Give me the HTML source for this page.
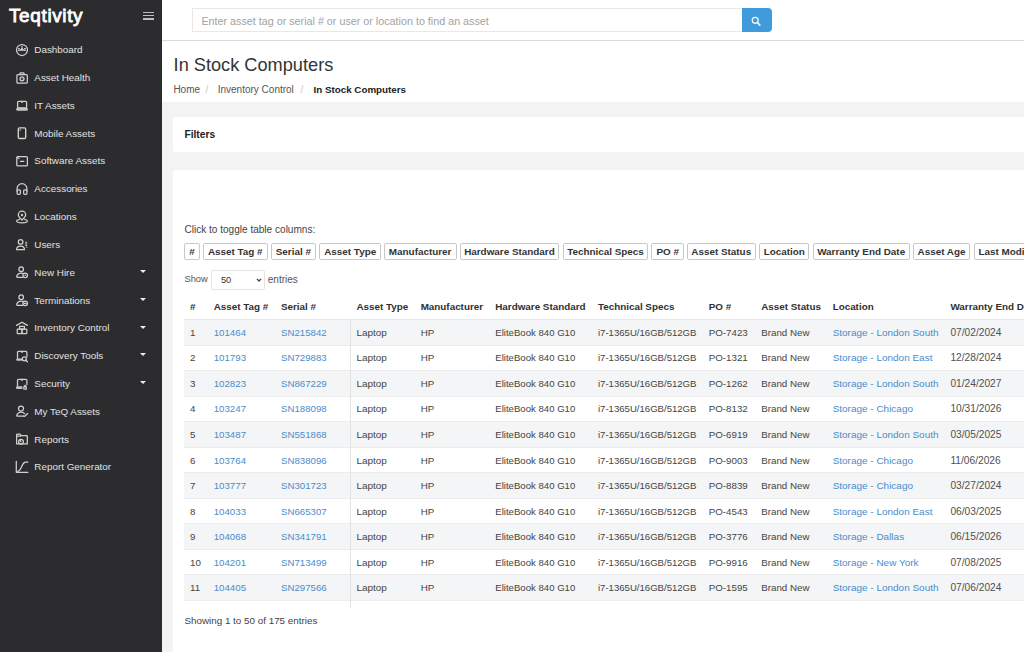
<!DOCTYPE html>
<html><head><meta charset="utf-8">
<style>
*{box-sizing:border-box;margin:0;padding:0}
html,body{width:1024px;height:652px;overflow:hidden;background:#fff;font-family:"Liberation Sans",sans-serif;color:#333}
.a{position:absolute;white-space:nowrap}
#sb{position:absolute;left:0;top:0;width:162px;height:652px;background:#2c2c2e}
.logo{position:absolute;left:9px;top:6.2px;font-size:19px;line-height:20px;font-weight:normal;color:#fff;letter-spacing:0.62px;-webkit-text-stroke:0.8px #fff}
.hb{position:absolute;left:143px;width:11px;height:1.4px;background:#bdbdbd}
.nv{position:absolute;left:34.3px;font-size:9.9px;line-height:14px;color:#e2e2e2;white-space:nowrap}
.ic{position:absolute;left:14.5px;width:14px;height:14px}
.ic svg{display:block}
.caret{position:absolute;left:140px;width:0;height:0;border-left:3px solid transparent;border-right:3px solid transparent;border-top:3.5px solid #eee}
#hdr{position:absolute;left:162px;top:0;width:862px;height:41px;background:#fff;border-bottom:1px solid #d9d9d9}
#search{position:absolute;left:192px;top:8px;width:551px;height:24px;border:1px solid #e8e8e8;border-radius:0;background:#fff}
#ph{position:absolute;left:201.4px;top:14px;font-size:10.75px;line-height:14px;color:#a2a2a2;white-space:nowrap}
#sbtn{position:absolute;left:742.3px;top:8px;width:29.3px;height:24px;background:#3f9bd9;border-radius:0 4px 4px 0}
#title{position:absolute;left:173.6px;top:54.1px;font-size:18.2px;line-height:22px;color:#333;white-space:nowrap}
.bc{position:absolute;top:82.6px;font-size:10px;line-height:14px;white-space:nowrap;color:#555}
#gray{position:absolute;left:162px;top:102px;width:862px;height:550px;background:#f3f3f4}
#filt{position:absolute;left:173px;top:117px;width:900px;height:34.5px;background:#fff;border-radius:3px}
#ftxt{position:absolute;left:184.4px;top:127.5px;font-size:10.26px;line-height:14px;font-weight:bold;color:#222;white-space:nowrap}
#card{position:absolute;left:173px;top:170px;width:900px;height:500px;background:#fff;border-radius:3px}
#ctt{position:absolute;left:184.4px;top:223.2px;font-size:10.07px;line-height:14px;color:#444;white-space:nowrap}
#tbs{position:absolute;left:184px;top:242.5px;width:1000px;white-space:nowrap;font-size:10px;line-height:0}
.tb{position:absolute;top:0;height:17px;border:1px solid #c9c9c9;border-radius:2px;padding:0;text-align:center;overflow:hidden;font-size:9.9px;line-height:15px;font-weight:bold;color:#333;background:#fff}
#show{position:absolute;left:184.4px;top:272px;font-size:9.4px;line-height:14px;color:#555;white-space:nowrap}
#sel{position:absolute;left:211px;top:270px;width:54px;height:19.5px;border:1px solid #e3e3e3;border-radius:2px;background:#fff}
#sel50{position:absolute;left:220.9px;top:273px;font-size:9.4px;line-height:14px;color:#333}
#entr{position:absolute;left:267.8px;top:272.5px;font-size:10px;line-height:14px;color:#555;white-space:nowrap}
#tbl{position:absolute;left:184px;top:293px;border-collapse:collapse;table-layout:fixed;width:876px}
#tbl th{height:26.5px;text-align:left;font-weight:bold;font-size:9.85px;color:#303030;padding:0 0 0 6px;white-space:nowrap;overflow:hidden;border-bottom:1px solid #e6e6e6;vertical-align:middle}
#tbl td{height:25.55px;font-size:9.75px;color:#444;padding:0 0 0 6px;white-space:nowrap;overflow:hidden;border-bottom:1px solid #ececec;vertical-align:middle}
#tbl tr.odd td{background:#f4f5f6}
#tbl td.lk{color:#4a8dcc}
#tbl td:nth-child(2){font-size:9.7px}
#tbl td:nth-child(3){font-size:9.67px}
#tbl td:nth-child(4){font-size:9.94px}
#tbl td:nth-child(6){font-size:9.6px}
#tbl td:nth-child(7){font-size:9.58px}
#tbl td:nth-child(10){font-size:9.98px}
#tbl td:nth-child(11){font-size:10.2px;color:#505050}
#vline{position:absolute;left:350px;top:320px;width:1px;height:288px;background:#e2e2e2}
#showing{position:absolute;left:184.4px;top:613.5px;font-size:9.85px;line-height:14px;color:#444;white-space:nowrap}
</style></head><body>
<div id="sb">
<div class="logo">Teqtivity</div>
<div class="hb" style="top:11.7px"></div><div class="hb" style="top:15.1px"></div><div class="hb" style="top:18.4px"></div>
<div class="nv" style="top:43.23px">Dashboard</div><div class="ic" style="top:42.90px"><svg width="14" height="14" viewBox="0 0 14 14"><circle cx="7" cy="7" r="5.5" stroke="#d0d0d0" stroke-width="1.25" fill="none" stroke-linecap="round" stroke-linejoin="round"/><path d="M3.6 7.3Q7 6.2 10.4 7.3" stroke="#d0d0d0" stroke-width="1.25" fill="none" stroke-linecap="round" stroke-linejoin="round"/><path d="M7 7V5.2" stroke="#d4d4d4" stroke-width="1.7" stroke-linecap="round"/><circle cx="7" cy="3.4" r=".6" fill="#d4d4d4"/><path d="M3.6 5.6h.8M9.6 5.6h.8" stroke="#d0d0d0" stroke-width="1.25" fill="none" stroke-linecap="round" stroke-linejoin="round"/></svg></div><div class="nv" style="top:71.05px">Asset Health</div><div class="ic" style="top:70.71px"><svg width="14" height="14" viewBox="0 0 14 14"><rect x="1.9" y="3.5" width="10.4" height="8.7" rx="0.9" stroke="#d0d0d0" stroke-width="1.25" fill="none" stroke-linecap="round" stroke-linejoin="round"/><path d="M4.6 3.4L5.2 1.9h3.6l.6 1.5" stroke="#d0d0d0" stroke-width="1.25" fill="none" stroke-linecap="round" stroke-linejoin="round"/><circle cx="7" cy="7.8" r="2" stroke="#d0d0d0" stroke-width="1.25" fill="none" stroke-linecap="round" stroke-linejoin="round"/><circle cx="7" cy="7.8" r=".5" fill="#d4d4d4"/></svg></div><div class="nv" style="top:98.85px">IT Assets</div><div class="ic" style="top:98.52px"><svg width="14" height="14" viewBox="0 0 14 14"><rect x="2.6" y="2.3" width="9" height="6.6" rx="1" stroke="#d0d0d0" stroke-width="1.25" fill="none" stroke-linecap="round" stroke-linejoin="round"/><path d="M6 2.5l1 .9 1-.9" stroke="#d0d0d0" stroke-width="1.25" fill="none" stroke-linecap="round" stroke-linejoin="round"/><rect x="1.2" y="8.8" width="11.7" height="3" rx="1.4" fill="#c4c4c4"/></svg></div><div class="nv" style="top:126.66px">Mobile Assets</div><div class="ic" style="top:126.33px"><svg width="14" height="14" viewBox="0 0 14 14"><rect x="3.3" y="1.9" width="7.4" height="10.6" rx="1.3" stroke="#d4d4d4" stroke-width="1.35" fill="none"/><circle cx="5.2" cy="3.9" r=".75" fill="#e0e0e0"/></svg></div><div class="nv" style="top:154.47px">Software Assets</div><div class="ic" style="top:154.14px"><svg width="14" height="14" viewBox="0 0 14 14"><rect x="1.8" y="2.6" width="10.6" height="9.3" rx="1" stroke="#d0d0d0" stroke-width="1.25" fill="none" stroke-linecap="round" stroke-linejoin="round"/><path d="M5.5 7.4h3.3" stroke="#d4d4d4" stroke-width="1.2" stroke-linecap="round"/><path d="M2.3 3.2l1.6 1.4" stroke="#d0d0d0" stroke-width="1.25" fill="none" stroke-linecap="round" stroke-linejoin="round"/></svg></div><div class="nv" style="top:182.28px">Accessories</div><div class="ic" style="top:181.95px"><svg width="14" height="14" viewBox="0 0 14 14"><path d="M2.1 9V6.6a4.9 4.9 0 0 1 9.8 0V9" stroke="#d0d0d0" stroke-width="1.25" fill="none" stroke-linecap="round" stroke-linejoin="round"/><rect x="2.1" y="7.9" width="3.3" height="4.4" rx="1" stroke="#d0d0d0" stroke-width="1.25" fill="none" stroke-linecap="round" stroke-linejoin="round"/><rect x="8.6" y="7.9" width="3.3" height="4.4" rx="1" stroke="#d0d0d0" stroke-width="1.25" fill="none" stroke-linecap="round" stroke-linejoin="round"/></svg></div><div class="nv" style="top:210.09px">Locations</div><div class="ic" style="top:209.76px"><svg width="14" height="14" viewBox="0 0 14 14"><path d="M7 10C4.6 7.8 3.3 6.3 3.3 4.8A3.7 3.7 0 0 1 10.7 4.8C10.7 6.3 9.4 7.8 7 10z" stroke="#d0d0d0" stroke-width="1.25" fill="none" stroke-linecap="round" stroke-linejoin="round"/><circle cx="7" cy="5" r="1.2" fill="#c8c8c8"/><path d="M4.4 9.3C2.6 9.7 1.6 10.3 1.6 11c0 1 2.4 1.8 5.4 1.8s5.4-.8 5.4-1.8c0-.7-1-1.3-2.8-1.7" stroke="#d0d0d0" stroke-width="1.25" fill="none" stroke-linecap="round" stroke-linejoin="round"/></svg></div><div class="nv" style="top:237.91px">Users</div><div class="ic" style="top:237.57px"><svg width="14" height="14" viewBox="0 0 14 14"><circle cx="5.6" cy="3.9" r="2.3" stroke="#d0d0d0" stroke-width="1.25" fill="none" stroke-linecap="round" stroke-linejoin="round"/><path d="M1.6 11.7C1.6 9.4 3.4 8 5.6 8S9.5 9.4 9.5 11.7z" stroke="#d0d0d0" stroke-width="1.25" fill="none" stroke-linecap="round" stroke-linejoin="round"/><path d="M10.2 4.2h2M10.2 5.8h2M10.2 7.4h2" stroke="#c0c0c0" stroke-width="1.1"/><circle cx="11.8" cy="9.2" r=".6" fill="#d4d4d4"/></svg></div><div class="nv" style="top:265.72px">New Hire</div><div class="ic" style="top:265.38px"><svg width="14" height="14" viewBox="0 0 14 14"><circle cx="6.2" cy="4.2" r="2.3" stroke="#d0d0d0" stroke-width="1.25" fill="none" stroke-linecap="round" stroke-linejoin="round"/><path d="M7.6 12.3H2.2C1.6 12.3 1.6 11.5 2 10.6 2.8 8.9 4.3 8.1 6.2 8.1c.6 0 1.1.1 1.6.3" stroke="#d0d0d0" stroke-width="1.25" fill="none" stroke-linecap="round" stroke-linejoin="round"/><circle cx="10.2" cy="10.3" r="2.3" stroke="#d0d0d0" stroke-width="1.25" fill="none" stroke-linecap="round" stroke-linejoin="round"/><circle cx="10.2" cy="10.3" r=".7" fill="#e8e8e8"/></svg></div><div class="caret" style="top:269.88px"></div><div class="nv" style="top:293.53px">Terminations</div><div class="ic" style="top:293.19px"><svg width="14" height="14" viewBox="0 0 14 14"><circle cx="6.2" cy="4.2" r="2.3" stroke="#d0d0d0" stroke-width="1.25" fill="none" stroke-linecap="round" stroke-linejoin="round"/><path d="M7.6 12.3H2.2C1.6 12.3 1.6 11.5 2 10.6 2.8 8.9 4.3 8.1 6.2 8.1c.6 0 1.1.1 1.6.3" stroke="#d0d0d0" stroke-width="1.25" fill="none" stroke-linecap="round" stroke-linejoin="round"/><circle cx="10.2" cy="10.3" r="2.3" stroke="#d0d0d0" stroke-width="1.25" fill="none" stroke-linecap="round" stroke-linejoin="round"/><path d="M9.2 10.3h2" stroke="#d0d0d0" stroke-width="1.25" fill="none" stroke-linecap="round" stroke-linejoin="round"/></svg></div><div class="caret" style="top:297.69px"></div><div class="nv" style="top:321.33px">Inventory Control</div><div class="ic" style="top:321.00px"><svg width="14" height="14" viewBox="0 0 14 14"><path d="M1.6 4.4L7 1.2l5.4 3.2" stroke="#d4d4d4" stroke-width="1.3" fill="none" stroke-linecap="round" stroke-linejoin="round"/><rect x="4.6" y="5.3" width="4.8" height="2.9" stroke="#d0d0d0" stroke-width="1.25" fill="none" stroke-linecap="round" stroke-linejoin="round"/><rect x="2.2" y="8.2" width="4.8" height="4.3" rx=".6" stroke="#d0d0d0" stroke-width="1.25" fill="none" stroke-linecap="round" stroke-linejoin="round"/><rect x="7" y="8.2" width="4.8" height="4.3" rx=".6" stroke="#d0d0d0" stroke-width="1.25" fill="none" stroke-linecap="round" stroke-linejoin="round"/></svg></div><div class="caret" style="top:325.50px"></div><div class="nv" style="top:349.14px">Discovery Tools</div><div class="ic" style="top:348.81px"><svg width="14" height="14" viewBox="0 0 14 14"><path d="M2.5 9.3V3.3a1 1 0 0 1 1-1h7.4a1 1 0 0 1 1 1v4.6" stroke="#d0d0d0" stroke-width="1.25" fill="none" stroke-linecap="round" stroke-linejoin="round"/><path d="M6.3 2.5l.7.8.7-.8" stroke="#d0d0d0" stroke-width="1.25" fill="none" stroke-linecap="round" stroke-linejoin="round"/><rect x="1.2" y="9.6" width="6" height="2.2" rx="1" fill="#c4c4c4"/><circle cx="9.3" cy="9.8" r="2" stroke="#d0d0d0" stroke-width="1.25" fill="none" stroke-linecap="round" stroke-linejoin="round"/><path d="M10.8 11.3l1.6 1.5" stroke="#d4d4d4" stroke-width="1.3" stroke-linecap="round"/></svg></div><div class="caret" style="top:353.31px"></div><div class="nv" style="top:376.95px">Security</div><div class="ic" style="top:376.62px"><svg width="14" height="14" viewBox="0 0 14 14"><path d="M2.5 9.3V3.3a1 1 0 0 1 1-1h7.4a1 1 0 0 1 1 1v4.2" stroke="#d0d0d0" stroke-width="1.25" fill="none" stroke-linecap="round" stroke-linejoin="round"/><path d="M6.3 2.5l.7.8.7-.8" stroke="#d0d0d0" stroke-width="1.25" fill="none" stroke-linecap="round" stroke-linejoin="round"/><rect x="1" y="9.3" width="6.6" height="2.6" rx="1.2" fill="#c4c4c4"/><path d="M8.3 12.7V9.6l1.8-2 1.8 2v3.1z" fill="#d0d0d0"/><rect x="9.2" y="10.6" width="1.8" height=".8" fill="#2c2c2e"/></svg></div><div class="caret" style="top:381.12px"></div><div class="nv" style="top:404.76px">My TeQ Assets</div><div class="ic" style="top:404.43px"><svg width="14" height="14" viewBox="0 0 14 14"><circle cx="6" cy="4.5" r="2.5" stroke="#d0d0d0" stroke-width="1.25" fill="none" stroke-linecap="round" stroke-linejoin="round"/><path d="M8.3 12.2H2.4C1.8 12.2 1.6 11.5 2 10.6 2.8 9 4.3 8.1 6 8.1c1.5 0 2.7.6 3.5 1.6" stroke="#d0d0d0" stroke-width="1.25" fill="none" stroke-linecap="round" stroke-linejoin="round"/><path d="M8.5 12l1.3.3 2.8-2.8" stroke="#d0d0d0" stroke-width="1.25" fill="none" stroke-linecap="round" stroke-linejoin="round"/></svg></div><div class="nv" style="top:432.57px">Reports</div><div class="ic" style="top:432.24px"><svg width="14" height="14" viewBox="0 0 14 14"><path d="M1.6 11.9V2.7a.6.6 0 0 1 .6-.6h2.8l1.1 1.4h5.6a.6.6 0 0 1 .6.6v7.8z" stroke="#d0d0d0" stroke-width="1.25" fill="none" stroke-linecap="round" stroke-linejoin="round"/><path d="M1.6 4.1h4" stroke="#d0d0d0" stroke-width="1.25" fill="none" stroke-linecap="round" stroke-linejoin="round"/><circle cx="6" cy="9.7" r="2.4" stroke="#d0d0d0" stroke-width="1.25" fill="none" stroke-linecap="round" stroke-linejoin="round"/><path d="M6 9.7L5 8.2" stroke="#d0d0d0" stroke-width="1.25" fill="none" stroke-linecap="round" stroke-linejoin="round"/></svg></div><div class="nv" style="top:460.38px">Report Generator</div><div class="ic" style="top:460.05px"><svg width="14" height="14" viewBox="0 0 14 14"><path d="M1.3 1.3v11h11.6" stroke="#d0d0d0" stroke-width="1.25" fill="none" stroke-linecap="round" stroke-linejoin="round"/><path d="M2.7 11.3C4.6 11 5.6 9 6.8 6.2 8 3.4 8.8 2.2 10.6 2.2h2.2" stroke="#d0d0d0" stroke-width="1.25" fill="none" stroke-linecap="round" stroke-linejoin="round"/></svg></div>
</div>
<div id="hdr"></div>
<div id="search"></div>
<div id="ph">Enter asset tag or serial # or user or location to find an asset</div>
<div id="sbtn"><svg width="29" height="24" viewBox="0 0 29 24"><circle cx="13.2" cy="12.3" r="3" stroke="#fff" stroke-width="1.15" fill="none"/><path d="M15.5 14.7l2.3 2.4" stroke="#fff" stroke-width="1.7" stroke-linecap="round"/></svg></div>
<div id="title">In Stock Computers</div>
<div class="bc" style="left:173.4px">Home</div>
<div class="bc" style="left:205.5px;color:#c8c8c8">/</div>
<div class="bc" style="left:217.7px">Inventory Control</div>
<div class="bc" style="left:300.5px;color:#c8c8c8">/</div>
<div class="bc" style="left:313.5px;top:82.6px;font-weight:bold;color:#222;font-size:9.8px">In Stock Computers</div>
<div id="gray"></div>
<div id="filt"></div>
<div id="ftxt">Filters</div>
<div id="card"></div>
<div id="ctt">Click to toggle table columns:</div>
<div id="tbs"><span class="tb" style="left:0.2px;width:15.8px">#</span><span class="tb" style="left:18.7px;width:65.1px">Asset Tag #</span><span class="tb" style="left:86.7px;width:45.3px">Serial #</span><span class="tb" style="left:135.4px;width:61.6px">Asset Type</span><span class="tb" style="left:199.6px;width:73.1px">Manufacturer</span><span class="tb" style="left:275.7px;width:99.5px">Hardware Standard</span><span class="tb" style="left:378.6px;width:85.8px">Technical Specs</span><span class="tb" style="left:467.4px;width:32.6px">PO #</span><span class="tb" style="left:502.5px;width:69.5px">Asset Status</span><span class="tb" style="left:575.3px;width:50.0px">Location</span><span class="tb" style="left:628.5px;width:97.3px">Warranty End Date</span><span class="tb" style="left:729.1px;width:56.9px">Asset Age</span><span class="tb" style="left:789.5px;width:86.5px;text-align:left;padding-left:4px">Last Modified</span></div>
<div id="show">Show</div>
<div id="sel"><svg style="position:absolute;left:44px;top:7px" width="6" height="4" viewBox="0 0 6 4"><path d="M0.9 0.9L3 3l2.1-2.1" stroke="#444" stroke-width="1.3" fill="none"/></svg></div>
<div id="sel50">50</div>
<div id="entr">entries</div>
<table id="tbl"><colgroup><col style="width:23.7px"><col style="width:67.3px"><col style="width:75.5px"><col style="width:64.2px"><col style="width:74.6px"><col style="width:102.7px"><col style="width:110.8px"><col style="width:52.5px"><col style="width:71.4px"><col style="width:117.8px"><col style="width:115.5px"></colgroup><thead><tr><th>#</th><th>Asset Tag #</th><th>Serial #</th><th>Asset Type</th><th>Manufacturer</th><th>Hardware Standard</th><th>Technical Specs</th><th>PO #</th><th>Asset Status</th><th>Location</th><th>Warranty End Date</th></tr></thead><tbody><tr class="odd"><td>1</td><td class="lk">101464</td><td class="lk">SN215842</td><td class="sep">Laptop</td><td>HP</td><td>EliteBook 840 G10</td><td>i7-1365U/16GB/512GB</td><td>PO-7423</td><td>Brand New</td><td class="lk">Storage - London South</td><td>07/02/2024</td></tr><tr class="even"><td>2</td><td class="lk">101793</td><td class="lk">SN729883</td><td class="sep">Laptop</td><td>HP</td><td>EliteBook 840 G10</td><td>i7-1365U/16GB/512GB</td><td>PO-1321</td><td>Brand New</td><td class="lk">Storage - London East</td><td>12/28/2024</td></tr><tr class="odd"><td>3</td><td class="lk">102823</td><td class="lk">SN867229</td><td class="sep">Laptop</td><td>HP</td><td>EliteBook 840 G10</td><td>i7-1365U/16GB/512GB</td><td>PO-1262</td><td>Brand New</td><td class="lk">Storage - London South</td><td>01/24/2027</td></tr><tr class="even"><td>4</td><td class="lk">103247</td><td class="lk">SN188098</td><td class="sep">Laptop</td><td>HP</td><td>EliteBook 840 G10</td><td>i7-1365U/16GB/512GB</td><td>PO-8132</td><td>Brand New</td><td class="lk">Storage - Chicago</td><td>10/31/2026</td></tr><tr class="odd"><td>5</td><td class="lk">103487</td><td class="lk">SN551868</td><td class="sep">Laptop</td><td>HP</td><td>EliteBook 840 G10</td><td>i7-1365U/16GB/512GB</td><td>PO-6919</td><td>Brand New</td><td class="lk">Storage - London South</td><td>03/05/2025</td></tr><tr class="even"><td>6</td><td class="lk">103764</td><td class="lk">SN838096</td><td class="sep">Laptop</td><td>HP</td><td>EliteBook 840 G10</td><td>i7-1365U/16GB/512GB</td><td>PO-9003</td><td>Brand New</td><td class="lk">Storage - Chicago</td><td>11/06/2026</td></tr><tr class="odd"><td>7</td><td class="lk">103777</td><td class="lk">SN301723</td><td class="sep">Laptop</td><td>HP</td><td>EliteBook 840 G10</td><td>i7-1365U/16GB/512GB</td><td>PO-8839</td><td>Brand New</td><td class="lk">Storage - Chicago</td><td>03/27/2024</td></tr><tr class="even"><td>8</td><td class="lk">104033</td><td class="lk">SN665307</td><td class="sep">Laptop</td><td>HP</td><td>EliteBook 840 G10</td><td>i7-1365U/16GB/512GB</td><td>PO-4543</td><td>Brand New</td><td class="lk">Storage - London East</td><td>06/03/2025</td></tr><tr class="odd"><td>9</td><td class="lk">104068</td><td class="lk">SN341791</td><td class="sep">Laptop</td><td>HP</td><td>EliteBook 840 G10</td><td>i7-1365U/16GB/512GB</td><td>PO-3776</td><td>Brand New</td><td class="lk">Storage - Dallas</td><td>06/15/2026</td></tr><tr class="even"><td>10</td><td class="lk">104201</td><td class="lk">SN713499</td><td class="sep">Laptop</td><td>HP</td><td>EliteBook 840 G10</td><td>i7-1365U/16GB/512GB</td><td>PO-9916</td><td>Brand New</td><td class="lk">Storage - New York</td><td>07/08/2025</td></tr><tr class="odd"><td>11</td><td class="lk">104405</td><td class="lk">SN297566</td><td class="sep">Laptop</td><td>HP</td><td>EliteBook 840 G10</td><td>i7-1365U/16GB/512GB</td><td>PO-1595</td><td>Brand New</td><td class="lk">Storage - London South</td><td>07/06/2024</td></tr></tbody></table>
<div id="vline"></div>
<div id="showing">Showing 1 to 50 of 175 entries</div>
</body></html>
